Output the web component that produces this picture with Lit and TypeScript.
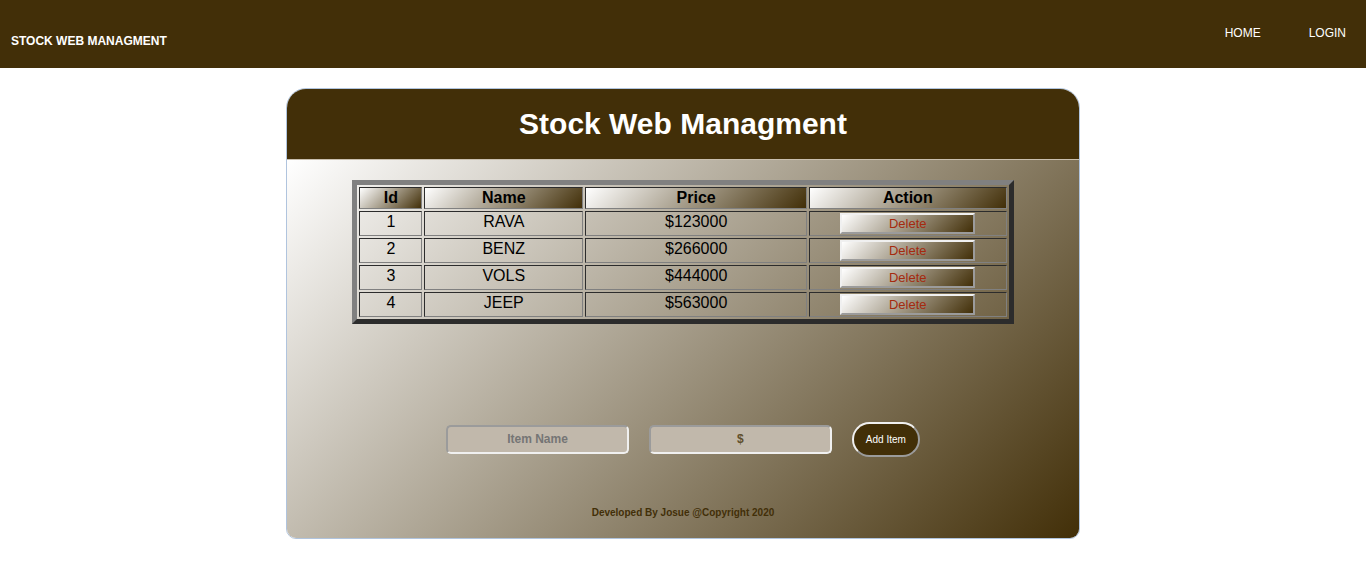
import { LitElement, html, css } from "lit";
import { customElement, state } from "lit/decorators.js";

interface Item {
  id: number;
  name: string;
  price: number;
}

@customElement("app-root")
export class AppRoot extends LitElement {
  static styles = css`
    :host {
      display: block;
      font-family: "Liberation Sans", Arial, Helvetica, sans-serif;
      --brown: #422f08;
      --fade: linear-gradient(135deg, #fff, var(--brown));
    }
    * {
      box-sizing: border-box;
    }
    .nav {
      display: flex;
      justify-content: space-between;
      align-items: flex-start;
      height: 68px;
      padding: 0 20px 0 11px;
      background: var(--brown);
      color: #fff;
      font-size: 12px;
      line-height: 14px;
    }
    .brand {
      margin: 0;
      padding-top: 34px;
      font-size: 12px;
    }
    .links {
      display: flex;
      gap: 48px;
      padding-top: 26px;
    }
    .links a {
      color: inherit;
      text-decoration: none;
    }
    .card {
      width: 58.1%;
      margin: 20px auto;
      border: 1px solid #b0c4de;
      border-radius: 20px 20px 10px 10px;
      overflow: hidden;
    }
    .title {
      margin: 0;
      padding: 17px 0 18px;
      border-bottom: 1px solid #c9bfae;
      background: var(--brown);
      color: #fff;
      font-size: 30px;
      line-height: 35px;
      text-align: center;
    }
    .body {
      padding: 20px 0 19px;
      background: var(--fade);
    }
    .stock {
      width: 83.5%;
      margin: 0 auto;
      table-layout: fixed;
      border: 5px outset gray;
      border-collapse: separate;
      border-spacing: 2px;
      font-size: 16px;
      line-height: 18px;
      text-align: center;
    }
    .stock th,
    .stock td {
      padding: 1px;
      border: 1px inset gray;
      vertical-align: top;
    }
    .stock th {
      background: var(--fade);
    }
    .c-id {
      width: 9.8%;
    }
    .c-name {
      width: 24.8%;
    }
    .c-price {
      width: 34.6%;
    }
    .delete {
      display: block;
      width: 70%;
      margin: 0 auto;
      padding: 1px 6px;
      border: 2px solid;
      border-color: #f0f0f0 #9b9b9b #9b9b9b #f0f0f0;
      background: var(--fade);
      color: #a52a0f;
      font: 13px/15px "Liberation Sans", Arial, sans-serif;
    }
    .add {
      display: flex;
      justify-content: center;
      align-items: baseline;
      gap: 20px;
      padding: 98px 0 50px;
    }
    .field {
      width: 23.1%;
      height: 29px;
      padding: 1px 2px;
      border: 2px solid;
      border-color: #9b9b9b #f0f0f0 #f0f0f0 #9b9b9b;
      border-radius: 5px;
      background: #c1b8ab;
      color: var(--brown);
      font: bold 12px "Liberation Sans", Arial, sans-serif;
      text-align: center;
    }
    .field::placeholder {
      color: #757575;
    }
    .price::placeholder {
      color: #5f4f2c;
    }
    .submit {
      height: 35px;
      padding: 0 12px;
      border: 2px solid;
      border-color: #f0f0f0 #9b9b9b #9b9b9b #f0f0f0;
      border-radius: 50px;
      background: var(--brown);
      color: #fff;
      font: 10px "Liberation Sans", Arial, sans-serif;
    }
    .foot {
      margin: 0;
      color: var(--brown);
      font-size: 10px;
      line-height: 12px;
      font-weight: bold;
      text-align: center;
    }
  `;

  @state() private items: Item[] = [
    { id: 1, name: "RAVA", price: 123000 },
    { id: 2, name: "BENZ", price: 266000 },
    { id: 3, name: "VOLS", price: 444000 },
    { id: 4, name: "JEEP", price: 563000 },
  ];

  private remove(id: number) {
    this.items = this.items.filter((item) => item.id !== id);
  }

  private add(event: Event) {
    event.preventDefault();
    const form = event.target as HTMLFormElement;
    const data = new FormData(form);
    const name = String(data.get("name")).trim();
    const price = Number(data.get("price"));
    if (!name || !price) return;
    const id = Math.max(0, ...this.items.map((item) => item.id)) + 1;
    this.items = [...this.items, { id, name, price }];
    form.reset();
  }

  render() {
    return html`
      <header class="nav">
        <h4 class="brand">STOCK WEB MANAGMENT</h4>
        <nav class="links">
          <a href="#home">HOME</a>
          <a href="#login">LOGIN</a>
        </nav>
      </header>
      <main class="card">
        <h1 class="title">Stock Web Managment</h1>
        <div class="body">
          <table class="stock">
            <thead>
              <tr>
                <th class="c-id">Id</th>
                <th class="c-name">Name</th>
                <th class="c-price">Price</th>
                <th>Action</th>
              </tr>
            </thead>
            <tbody>
              ${this.items.map(
                (item) => html`
                  <tr>
                    <td>${item.id}</td>
                    <td>${item.name}</td>
                    <td>$${item.price}</td>
                    <td>
                      <button class="delete" type="button" @click=${() => this.remove(item.id)}>Delete</button>
                    </td>
                  </tr>
                `
              )}
            </tbody>
          </table>
          <form class="add" @submit=${this.add}>
            <input class="field" name="name" type="text" placeholder="Item Name" aria-label="Item Name" />
            <input class="field price" name="price" type="text" placeholder="$" aria-label="Price" />
            <button class="submit" type="submit">Add Item</button>
          </form>
          <p class="foot">Developed By Josue @Copyright 2020</p>
        </div>
      </main>
    `;
  }
}
